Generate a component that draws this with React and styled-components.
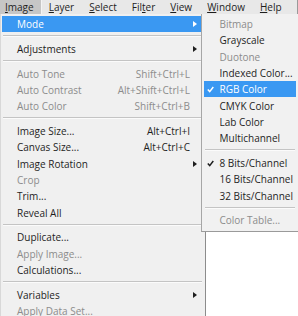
import React from "react";
import styled, { createGlobalStyle } from "styled-components";

const GlobalStyle = createGlobalStyle`
  body {
    margin: 0;
    background: #ffffff;
    font-family: "Open Sans", "Noto Sans", sans-serif;
  }
`;

const highlight = "#3a98f2";

const Page = styled.div`
  width: 298px;
  height: 316px;
  overflow: hidden;
  display: flex;
  flex-direction: column;
  font-size: 10px;
  color: #1e1e1e;
`;

const MenuBar = styled.div`
  height: 15px;
  display: flex;
  align-items: stretch;
  background: #e8e8e8;
  border-right: 1px solid #9a9a9a;
`;

const MenuTitle = styled.div`
  display: flex;
  align-items: center;
  padding: 0 7px;
  background: ${(p) => (p.$active ? "#c6c6c6" : "transparent")};
  border-right: 1px solid ${(p) => (p.$active ? "#f4f4f4" : "transparent")};

  &:first-child {
    padding-left: 5px;
  }

  u {
    text-decoration-thickness: 1px;
    text-underline-offset: 1px;
  }
`;

const Body = styled.div`
  position: relative;
  flex: 1;
`;

const MainMenu = styled.div`
  width: 206px;
  box-sizing: border-box;
  padding: 2px 2px 0 1px;
  background: #f0f0f0;
  border-left: 1px solid #d8d8d8;
  border-right: 1px solid #8c8c8c;
  height: 100%;
`;

const SubMenu = styled.div`
  position: absolute;
  top: 0;
  left: 201px;
  width: 97px;
  box-sizing: border-box;
  padding: 2px 2px;
  background: #f1f1f1;
  border-left: 1px solid #a6a6a6;
  border-bottom: 1px solid #9a9a9a;
`;

const Item = styled.div`
  height: 16.3px;
  display: grid;
  grid-template-columns: ${(p) => (p.$sub ? "15.5px 1fr" : "1fr auto 13px")};
  align-items: center;
  padding-left: ${(p) => (p.$sub ? "0" : "15px")};
  white-space: nowrap;
  color: ${(p) => (p.$active ? "#ffffff" : p.$disabled ? "#8c8c8c" : "#1e1e1e")};
  background: ${(p) => (p.$active ? highlight : "transparent")};
`;

const Shortcut = styled.span`
  text-align: right;
`;

const Arrow = styled.span`
  width: 0;
  height: 0;
  margin-left: 3px;
  border-left: 4px solid ${(p) => (p.$light ? "#ffffff" : "#1e1e1e")};
  border-top: 3px solid transparent;
  border-bottom: 3px solid transparent;
`;

const CheckCell = styled.span`
  display: flex;
  align-items: center;
  padding-left: 3px;
`;

const Separator = styled.div`
  height: 8.5px;
  position: relative;
  margin: 0 1px;

  &::after {
    content: "";
    position: absolute;
    left: 0;
    right: 0;
    top: 3px;
    height: 1px;
    background: #c4c4c4;
    border-bottom: 1px solid #fbfbfb;
  }
`;

const titles = [
  ["I", "mage", true],
  ["L", "ayer"],
  ["S", "elect"],
  ["Fil", "t", "er"],
  ["V", "iew"],
  ["W", "indow"],
  ["H", "elp"],
];

const mainItems = [
  { label: "Mode", arrow: true, active: true },
  "-",
  { label: "Adjustments", arrow: true },
  "-",
  { label: "Auto Tone", shortcut: "Shift+Ctrl+L", disabled: true },
  { label: "Auto Contrast", shortcut: "Alt+Shift+Ctrl+L", disabled: true },
  { label: "Auto Color", shortcut: "Shift+Ctrl+B", disabled: true },
  "-",
  { label: "Image Size...", shortcut: "Alt+Ctrl+I" },
  { label: "Canvas Size...", shortcut: "Alt+Ctrl+C" },
  { label: "Image Rotation", arrow: true },
  { label: "Crop", disabled: true },
  { label: "Trim..." },
  { label: "Reveal All" },
  "-",
  { label: "Duplicate..." },
  { label: "Apply Image...", disabled: true },
  { label: "Calculations..." },
  "-",
  { label: "Variables", arrow: true },
  { label: "Apply Data Set...", disabled: true },
];

const subItems = [
  { label: "Bitmap", disabled: true },
  { label: "Grayscale" },
  { label: "Duotone", disabled: true },
  { label: "Indexed Color..." },
  { label: "RGB Color", checked: true, active: true },
  { label: "CMYK Color" },
  { label: "Lab Color" },
  { label: "Multichannel" },
  "-",
  { label: "8 Bits/Channel", checked: true },
  { label: "16 Bits/Channel" },
  { label: "32 Bits/Channel" },
  "-",
  { label: "Color Table...", disabled: true },
];

function Check({ color }) {
  return (
    <svg width="7" height="7" viewBox="0 0 7 7">
      <path d="M0.8 3.6 L2.7 5.6 L6.3 1" fill="none" stroke={color} strokeWidth="1.5" />
    </svg>
  );
}

function renderTitle(t, i) {
  const active = t[2] === true;
  if (t.length === 3 && !active) {
    return (
      <MenuTitle key={i}>
        {t[0]}
        <u>{t[1]}</u>
        {t[2]}
      </MenuTitle>
    );
  }
  return (
    <MenuTitle key={i} $active={active}>
      <u>{t[0]}</u>
      {t[1]}
    </MenuTitle>
  );
}

export default function App() {
  return (
    <Page>
      <GlobalStyle />
      <MenuBar>{titles.map(renderTitle)}</MenuBar>
      <Body>
        <MainMenu>
          {mainItems.map((it, i) =>
            it === "-" ? (
              <Separator key={i} />
            ) : (
              <Item key={i} $active={it.active} $disabled={it.disabled}>
                <span>{it.label}</span>
                <Shortcut>{it.shortcut}</Shortcut>
                {it.arrow ? <Arrow $light={it.active} /> : <span />}
              </Item>
            )
          )}
        </MainMenu>
        <SubMenu>
          {subItems.map((it, i) =>
            it === "-" ? (
              <Separator key={i} />
            ) : (
              <Item key={i} $sub $active={it.active} $disabled={it.disabled}>
                <CheckCell>
                  {it.checked && <Check color={it.active ? "#ffffff" : "#1e1e1e"} />}
                </CheckCell>
                <span>{it.label}</span>
              </Item>
            )
          )}
        </SubMenu>
      </Body>
    </Page>
  );
}
